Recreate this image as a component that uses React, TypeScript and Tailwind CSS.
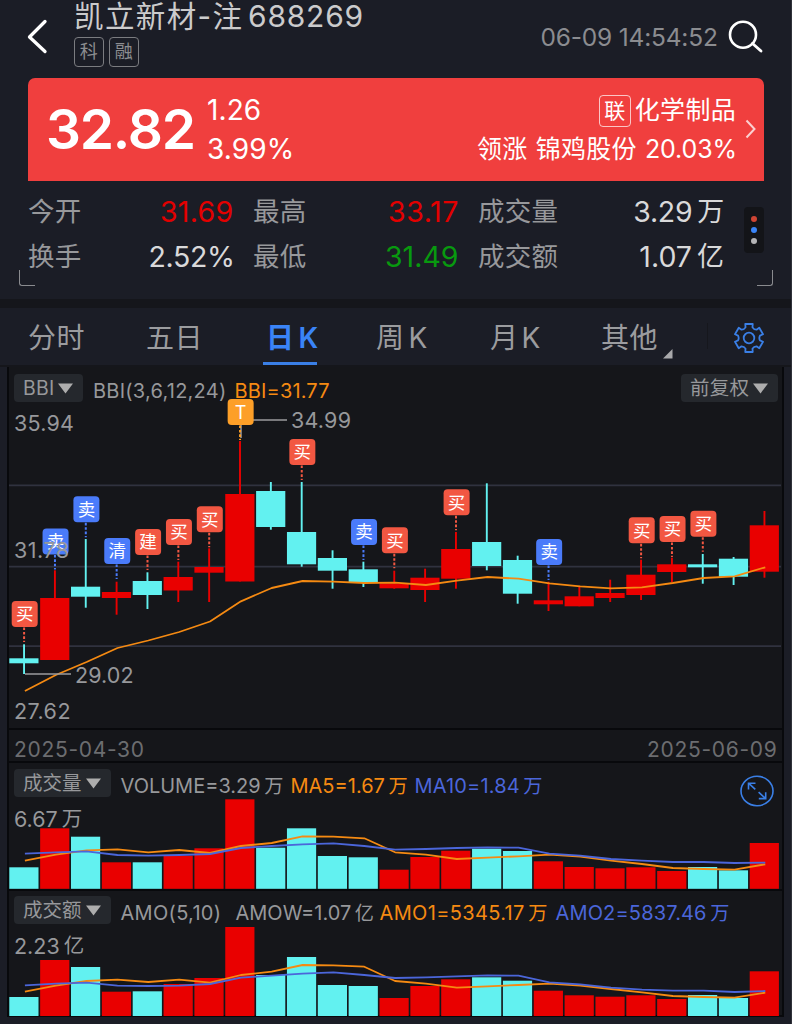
import React from "react";

type Candle = { up: boolean; open: number; close: number; high: number; low: number };

const STEP = 30.85;
const X0 = 23.9;
const cx = (i: number) => X0 + STEP * i;

const RED = "#e90000";
const CYAN = "#62f1f0";
const ORANGE = "#f58a12";
const BLUE = "#4b66da";

const c = (up: boolean, open: number, close: number, high: number, low: number): Candle => ({ up, open, close, high, low });

const candles: Candle[] = [
  c(false, 658.3, 663.3, 644.3, 674),
  c(true, 598, 660, 570.3, 660),
  c(false, 586.7, 596.7, 539, 607.7),
  c(true, 592, 598, 581.7, 614.7),
  c(false, 581, 595, 572.3, 609),
  c(true, 577, 590.5, 561.7, 602),
  c(true, 567, 572.7, 548.3, 602),
  c(true, 494, 581.5, 441, 581.5),
  c(false, 491, 527, 482, 529.7),
  c(false, 532, 564.3, 482, 566.7),
  c(false, 558, 570.7, 550.3, 588.7),
  c(false, 569.3, 582.3, 561.7, 587),
  c(true, 583.3, 588.3, 570.7, 588.7),
  c(true, 577.7, 590, 568.7, 602),
  c(true, 549, 578.7, 532, 588.7),
  c(false, 542, 566, 483.3, 570.3),
  c(false, 560, 593.7, 555.7, 603.7),
  c(true, 600.3, 604.3, 581.7, 611),
  c(true, 596.3, 606.3, 586.3, 606.3),
  c(true, 593, 598, 579.7, 602),
  c(true, 574.7, 595, 559.7, 600),
  c(true, 564.3, 572, 557.7, 582.3),
  c(false, 564.3, 567.3, 554, 583.7),
  c(false, 558.7, 576.7, 557, 585),
  c(true, 525.3, 571.7, 511, 577.7),
];

const bbi = [691, 675, 662, 648, 640.5, 632, 621.5, 601.3, 588, 581, 581.7, 583, 582.7, 585, 580.7, 577, 578.7, 583.3, 586.3, 588.3, 587.3, 583, 578, 576.3, 567.3];

const markers: { i: number; top: number; label: string; kind: "buy" | "sell" | "t" }[] = [
  { i: 0, top: 601, label: "买", kind: "buy" },
  { i: 1, top: 528.4, label: "卖", kind: "sell" },
  { i: 2, top: 496.3, label: "卖", kind: "sell" },
  { i: 3, top: 538, label: "清", kind: "sell" },
  { i: 4, top: 529, label: "建", kind: "buy" },
  { i: 5, top: 519, label: "买", kind: "buy" },
  { i: 6, top: 506.3, label: "买", kind: "buy" },
  { i: 7, top: 399, label: "T", kind: "t" },
  { i: 9, top: 439, label: "买", kind: "buy" },
  { i: 11, top: 519, label: "卖", kind: "sell" },
  { i: 12, top: 527.3, label: "买", kind: "buy" },
  { i: 14, top: 489.3, label: "买", kind: "buy" },
  { i: 17, top: 539, label: "卖", kind: "sell" },
  { i: 20, top: 517.3, label: "买", kind: "buy" },
  { i: 21, top: 516, label: "买", kind: "buy" },
  { i: 22, top: 510.7, label: "买", kind: "buy" },
];
const markerColor = { buy: "#f25742", sell: "#4a7bfa", t: "#fd9f28" };

const volume = {
  tops: [867.3, 828.3, 836.7, 862.3, 862.3, 855.7, 848.3, 799.3, 847.7, 828.3, 856, 857.3, 869.7, 857, 850.7, 848.7, 851, 861.3, 867, 868.3, 867.3, 871, 867, 870.3, 843],
  fast: [860.7, 854.7, 850.3, 849.3, 852.3, 850, 853, 846, 843, 836.3, 836.7, 838.3, 852.3, 854.7, 859, 857.7, 856.3, 854.7, 856.7, 860.7, 864, 868, 869, 869.7, 864.3],
  slow: [853.7, 852.3, 851.3, 855, 855.7, 855, 854, 848, 846, 844.3, 843.3, 846, 849.7, 849, 848, 847.3, 847.7, 853.7, 855.7, 859, 860.7, 862, 862, 863, 862.7],
};
const amount = {
  tops: [997, 960, 967, 991.7, 991.3, 984, 978, 927, 975, 957, 985, 986, 998, 986, 979.3, 977.3, 980.7, 990.7, 995.3, 996.7, 995.3, 999, 995, 998, 971.3],
  fast: [991.7, 985.7, 981, 979.7, 982, 979.7, 982.7, 975, 971.7, 965, 965.3, 966.7, 981, 983.7, 987.7, 986.3, 985, 983.7, 985.7, 989, 992.3, 996, 997, 997.7, 992.7],
  slow: [985.3, 983.7, 982.7, 985.7, 986, 985.7, 984, 977.7, 975.7, 973.7, 972.3, 975, 978, 977.3, 976.3, 975.3, 975.7, 982.3, 984.3, 987.7, 989.7, 990.7, 990.7, 992, 991],
};

const line = (ys: number[]) => ys.map((y, i) => `${(cx(i) + 1).toFixed(1)},${y}`).join(" ");

function AxisText({ x, cy, w, fill = "#97989b", children }: { x: number; cy: number; w: number; fill?: string; children: string }) {
  return (
    <text x={x} y={cy + 7.9} fontSize={21.5} fill={fill} textLength={w} lengthAdjust="spacing">
      {children}
    </text>
  );
}

function PriceChart() {
  return (
    <svg className="absolute inset-0 block" width={774} height={361} viewBox="9 367 774 361">
      {[485.4, 566.6, 646.1].map((y) => (
        <line key={y} x1={9} x2={781} y1={y} y2={y} stroke="#30323f" strokeWidth={1.6} />
      ))}
      {candles.map((k, i) => (
        <g key={i} fill={k.up ? RED : CYAN}>
          <rect x={cx(i) - 0.8} y={k.high} width={1.9} height={k.low - k.high} />
          <rect x={cx(i) - 14.6} y={k.open} width={29.2} height={k.close - k.open} />
        </g>
      ))}
      <polyline points={line(bbi)} fill="none" stroke={ORANGE} strokeWidth={1.8} strokeLinejoin="round" />
      <path d="M241 438V420H287M25 674H71" fill="none" stroke="#9a9a9d" strokeWidth={1.5} />
      {markers.map((m) => {
        const x = cx(m.i) + 0.8;
        return (
          <g key={m.i}>
            <line x1={x - 0.6} x2={x - 0.6} y1={m.top + 26.5} y2={m.top + 41} stroke={markerColor[m.kind]} strokeWidth={2} strokeDasharray="2.6 1.8" />
            <rect x={x - 13} y={m.top} width={26} height={26} rx={4} fill={markerColor[m.kind]} />
            <text x={x} y={m.top + (m.kind === "t" ? 20 : 19.4)} fontSize={m.kind === "t" ? 18 : 17.5} fill="#fff" textAnchor="middle">
              {m.label}
            </text>
          </g>
        );
      })}
      <AxisText x={14} cy={423} w={60}>35.94</AxisText>
      <AxisText x={14} cy={550.5} w={55}>31.78</AxisText>
      <AxisText x={14} cy={711.5} w={56.5}>27.62</AxisText>
      <AxisText x={291} cy={420.5} w={60}>34.99</AxisText>
      <AxisText x={75} cy={674.7} w={58.5}>29.02</AxisText>
    </svg>
  );
}

function BarChart({ data, top, base }: { data: typeof volume; top: number; base: number }) {
  return (
    <svg className="absolute inset-0 block" width={774} height={126} viewBox={`9 ${top} 774 126`}>
      {data.tops.map((y, i) => (
        <rect key={i} x={cx(i) - 14.6} y={y} width={29.2} height={base - y} fill={candles[i].up ? RED : CYAN} />
      ))}
      <polyline points={line(data.fast)} fill="none" stroke={ORANGE} strokeWidth={1.8} strokeLinejoin="round" />
      <polyline points={line(data.slow)} fill="none" stroke={BLUE} strokeWidth={1.8} strokeLinejoin="round" />
    </svg>
  );
}

function Picker({ children, className }: { children: string; className: string }) {
  return (
    <button className={`relative flex h-7 shrink-0 items-center justify-between rounded-[4px] bg-[#25282d] pr-[10.5px] pl-[9px] text-[19.5px] leading-7 text-[#97989b] ${className}`}>
      <span>{children}</span>
      <svg width="15" height="11" viewBox="0 0 15 11">
        <path d="M0 0.5H15L7.5 10.5Z" fill="#adadad" />
      </svg>
    </button>
  );
}

function Unit({ children }: { children: string }) {
  return <span className="ml-[3.5px] text-[19.2px]">{children}</span>;
}

const gear = (() => {
  const p = (r: number, deg: number) => {
    const a = (deg * Math.PI) / 180;
    return `${(17 + r * Math.cos(a)).toFixed(2)} ${(17 + r * Math.sin(a)).toFixed(2)}`;
  };
  let d = "";
  for (let k = 0; k < 6; k++) {
    const a = -90 + k * 60;
    d += `${k ? "L" : "M"}${p(11.2, a - 18)}L${p(14.5, a - 15)}L${p(14.5, a + 15)}L${p(11.2, a + 18)}Q${p(9.7, a + 30)} ${p(11.2, a + 42)}`;
  }
  return d + "Z";
})();

function Stat({ label, value, unit, tone, className }: { label: string; value: string; unit?: string; tone: string; className: string }) {
  return (
    <div className={`flex h-[45px] items-center justify-between ${className}`}>
      <span className="text-[26.5px] tracking-[0.3px] text-[#97989b]">{label}</span>
      <span className={`flex text-[28.5px] ${tone}`}>
        {value}
        {unit && <span className="ml-[5px] text-[27px]">{unit}</span>}
      </span>
    </div>
  );
}

export default function App() {
  return (
    <div
      className="flex h-[1024px] w-[792px] flex-col overflow-hidden border-r border-[#30323a] bg-[#1b1d26] whitespace-nowrap text-[#97989b]"
      style={{ fontFamily: 'Inter, "Noto Sans CJK SC", sans-serif' }}
    >
      {/* Title bar */}
      <header className="flex h-[78px] shrink-0">
        <svg className="mt-[18px] ml-[25px] shrink-0" width="24" height="38" viewBox="0 0 24 38">
          <path d="M20 3.5L4.5 19L20 33.5" fill="none" stroke="#fff" strokeWidth="3.3" strokeLinecap="round" strokeLinejoin="round" />
        </svg>
        <div className="ml-[25px] w-[440px]">
          <div className="flex h-[32px] items-center text-[30px] leading-8 text-[#cbcbcc]">
            <span className="w-[174px] text-[29.5px] tracking-[1.4px]">凯立新材-注</span>
            <span className="tracking-[0.8px]">688269</span>
          </div>
          <div className="mt-[5px] flex gap-[5.5px] text-[18px] leading-[28px] text-[#8c8d90]">
            <span className="h-[30px] w-[29.5px] rounded-[4px] border border-[#7b7c80] text-center">科</span>
            <span className="h-[30px] w-[29.5px] rounded-[4px] border border-[#7b7c80] text-center">融</span>
          </div>
        </div>
        <div className="ml-[26.5px] w-[187.5px] text-[24.5px] leading-[75px] tracking-[-0.2px] text-[#8b8c90]">06-09 14:54:52</div>
        <svg className="mt-[18px] shrink-0" width="36" height="38" viewBox="0 0 36 38">
          <circle cx="15" cy="16.7" r="13" fill="none" stroke="#fff" strokeWidth="2.6" />
          <path d="M24.5 25.5L33 33" stroke="#fff" strokeWidth="2.9" strokeLinecap="round" />
        </svg>
      </header>

      {/* Quote */}
      <section className="mr-[27px] ml-[28px] flex h-[103px] shrink-0 rounded-t-[7px] bg-[#f03f3e] pl-[18px] text-white">
        <div className="w-[161px] text-[55px] leading-[103px] font-semibold tracking-[-1.2px]">32.82</div>
        <div className="flex flex-col pt-[13px] text-[28px] leading-[39px]">
          <span className="tracking-[0.1px]">1.26</span>
          <span className="tracking-[0.1px]">3.99%</span>
        </div>
        <div className="ml-auto flex flex-col items-end pt-[13px] pr-[9px] text-[25px] leading-[39px]">
          <div className="flex h-[39px] items-center">
            <span className="mr-[4px] h-[32px] w-[32px] rounded-[4px] border border-white/70 text-center text-[21px] leading-[29px]">联</span>
            <span className="tracking-[0.3px]">化学制品</span>
          </div>
          <div className="-mr-px flex">
            <span className="mr-[8px] tracking-[0.3px]">领涨</span>
            <span className="mr-[8px] tracking-[0.3px]">锦鸡股份</span>
            <span className="tracking-[-0.1px]">20.03%</span>
          </div>
        </div>
        <svg className="mt-[41px] mr-[7px] shrink-0" width="12" height="20" viewBox="0 0 12 20">
          <path d="M1.5 1.5L9.5 10L1.5 18.5" fill="none" stroke="#fbd0d0" strokeWidth="2" />
        </svg>
      </section>

      {/* Statistics */}
      <section className="relative flex h-[118px] shrink-0 pt-[8px] pl-[28px]">
        <div className="flex flex-col leading-[45px]">
          <div className="flex">
            <Stat className="w-[205.5px]" label="今开" value="31.69" tone="tracking-[0.3px] text-[#e30000]" />
            <Stat className="ml-[19.5px] w-[206px]" label="最高" value="33.17" tone="tracking-[0.6px] text-[#e30000]" />
            <Stat className="ml-[19px] w-[246px]" label="成交量" value="3.29" unit="万" tone="tracking-[-0.3px] text-[#d9d9da]" />
          </div>
          <div className="flex">
            <Stat className="w-[206.5px]" label="换手" value="2.52%" tone="tracking-[-0.4px] text-[#d9d9da]" />
            <Stat className="ml-[18.5px] w-[205.5px]" label="最低" value="31.49" tone="text-[#08990f]" />
            <Stat className="ml-[19.5px] w-[246px]" label="成交额" value="1.07" unit="亿" tone="text-[#d9d9da]" />
          </div>
        </div>
        <div className="mt-[18px] ml-[20px] flex h-[46px] w-5 flex-col items-center justify-center gap-[5.3px] rounded-[4px] bg-[#131418]">
          <i className="size-[6px] rounded-full bg-[#cf4534]" />
          <i className="size-[6px] rounded-full bg-[#3a84f7]" />
          <i className="size-[6px] rounded-full bg-[#b4b4b6]" />
        </div>
        <i className="absolute bottom-[13px] left-[19px] h-4 w-4 rounded-bl-[3px] border-b border-l border-[#8a8b8f]" />
        <i className="absolute right-[18px] bottom-[13px] h-4 w-4 rounded-br-[3px] border-r border-b border-[#8a8b8f]" />
      </section>
      <div className="h-[9px] shrink-0 bg-[#15161b]" />

      {/* Period tabs */}
      <nav className="flex h-[57px] shrink-0 text-[28px] leading-[61px] tracking-[0.6px] text-[#9b9c9f]">
        <span className="ml-[28px] w-[118px]">分时</span>
        <span className="w-[117px]">五日</span>
        <span className="relative w-[54px] pl-[3px] font-bold text-[#3a84f7]">
          日<span className="ml-[4px] font-semibold">K</span>
          <i className="absolute inset-x-0 bottom-0 h-[3px] bg-[#3a7fe6]" />
        </span>
        <span className="ml-[59px] w-[114px]">周<span className="ml-[4px]">K</span></span>
        <span className="w-[111px]">月<span className="ml-[3px]">K</span></span>
        <span className="w-[60px]">其他</span>
        <svg className="mt-[41px] ml-[2px]" width="10" height="10" viewBox="0 0 10 10">
          <path d="M9.5 0V9.5H0Z" fill="#a9a9ab" />
        </svg>
        <i className="mt-[15px] ml-[34px] h-[26px] w-px bg-[#16171d]" />
        <svg className="mt-[13px] ml-[24px]" width="34" height="34" viewBox="0 0 34 34" fill="none" stroke="#3a7fe6" strokeWidth="1.8" strokeLinejoin="round">
          <path d={gear} />
          <circle cx="17" cy="17" r="5.3" />
        </svg>
      </nav>

      {/* Charts */}
      <main className="flex h-[652px] shrink-0 flex-col border-t-2 border-[#15161b] px-[7px]">
        <div className="flex flex-col border-x-2 border-[#08090c] bg-[#15161a]">
          <section className="relative h-[361px] w-[774px]">
            <PriceChart />
            <div className="relative flex pt-[7px] pl-[5px] text-[20px] leading-[34px] tracking-[0.25px]">
              <Picker className="w-[69px]">BBI</Picker>
              <span className="ml-[10px] w-[141.5px]">BBI(3,6,12,24)</span>
              <span className="tracking-[0.15px] text-[#f58a12]">BBI=31.77</span>
              <Picker className="mr-[5px] ml-auto w-[97px]">前复权</Picker>
            </div>
          </section>
          <div className="flex h-[35px] items-center justify-between border-y-2 border-[#08090c] pt-[8px] pr-[4.5px] pl-[5px] text-[21px] leading-[25px] tracking-[0.7px] text-[#6c6d70]">
            <span>2025-04-30</span>
            <span>2025-06-09</span>
          </div>
          <section className="relative h-[126px] w-[774px]">
            <BarChart data={volume} top={763} base={888.8} />
            <div className="relative flex h-[40px] pt-[6px] pl-[5px] text-[20px] leading-[35px]">
              <Picker className="w-[97px]">成交量</Picker>
              <span className="ml-[9.5px] w-[170px]">VOLUME=3.29<Unit>万</Unit></span>
              <span className="w-[124px] text-[#f58a12]">MA5=1.67<Unit>万</Unit></span>
              <span className="tracking-[0.15px] text-[#4b66da]">MA10=1.84<Unit>万</Unit></span>
              <svg className="mt-[6px] mr-[9px] ml-auto" width="34" height="32" viewBox="0 0 34 32" fill="none" stroke="#3a7fe6" strokeWidth="1.6">
                <ellipse cx="17" cy="16" rx="16" ry="14.7" />
                <path d="M8.5 14.5V8.2H15.5M8.5 8.2L15.3 14.3M18.6 17.2L25.7 23.6M25.7 17.2V23.6H18.8" />
              </svg>
            </div>
            <div className="relative flex pl-[5px] text-[21.5px] leading-[32px]">6.67<span className="ml-1 text-[20.5px]">万</span></div>
          </section>
          <section className="relative h-[128px] w-[774px] border-y-2 border-[#08090c]">
            <BarChart data={amount} top={891} base={1016} />
            <div className="relative flex h-[39px] pt-[5px] pl-[5px] text-[20px] leading-[35px]">
              <Picker className="w-[97px]">成交额</Picker>
              <span className="ml-[9.5px] w-[115px] tracking-[0.3px]">AMO(5,10)</span>
              <span className="w-[144px]">AMOW=1.07<Unit>亿</Unit></span>
              <span className="w-[176px] tracking-[0.35px] text-[#f58a12]">AMO1=5345.17<Unit>万</Unit></span>
              <span className="tracking-[0.15px] text-[#4b66da]">AMO2=5837.46<Unit>万</Unit></span>
            </div>
            <div className="relative flex pl-[5px] text-[21.5px] leading-[32px]">2.23<span className="ml-1 text-[20.5px]">亿</span></div>
          </section>
        </div>
      </main>
    </div>
  );
}
